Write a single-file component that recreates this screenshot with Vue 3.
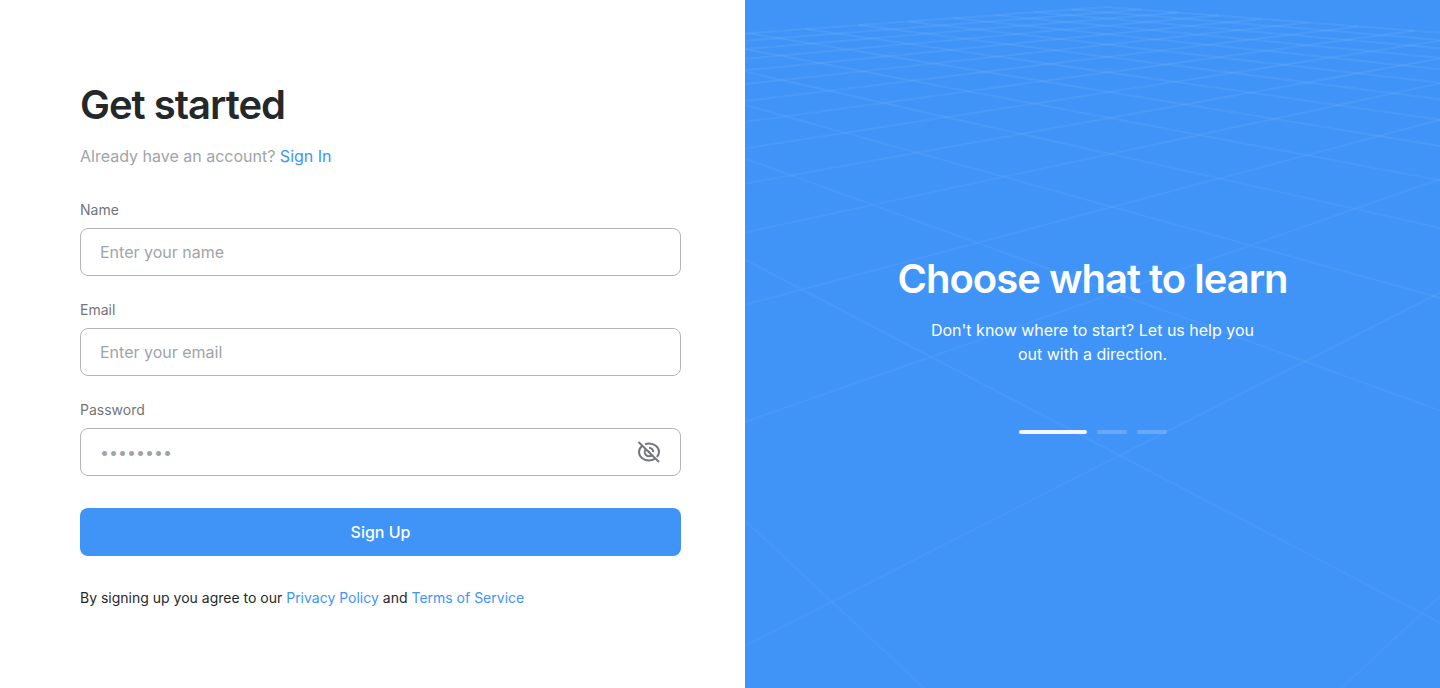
<script setup>
import { ref } from 'vue'

const name = ref('')
const email = ref('')
const password = ref('')
const revealed = ref(false)
const active = ref(0)
const slides = ['Choose what to learn', 'Learn at your pace', 'Track your progress']

// Floor grid seen in perspective: p and q number the two families of lines.
function project(p, q) {
  const k = (p + q) / 2
  const m = (p - q) / 4
  const depth = 1 / (0.001476 + 0.000427 * k - 0.000025 * m)
  return `${(359 + (0.03 + 0.87 * m) * depth).toFixed(1)} ${(depth - 70).toFixed(1)}`
}

const gridLines = []
for (let p = -27; p <= 27; p += 2) {
  const near = Math.max(-27, -4.6 - p)
  gridLines.push(`M${project(p, near)}L${project(p, 27)}`)
  gridLines.push(`M${project(near, p)}L${project(27, p)}`)
}
</script>

<template>
  <main class="page">
    <section class="signup">
      <h1 class="title">Get started</h1>
      <p class="lead">Already have an account? <a href="#signin">Sign In</a></p>
      <form class="form" @submit.prevent>
        <div class="field">
          <label for="name">Name</label>
          <input id="name" v-model="name" type="text" placeholder="Enter your name" />
        </div>
        <div class="field">
          <label for="email">Email</label>
          <input id="email" v-model="email" type="email" placeholder="Enter your email" />
        </div>
        <div class="field">
          <label for="password">Password</label>
          <div class="secret">
            <input id="password" v-model="password" :type="revealed ? 'text' : 'password'" placeholder="••••••••" />
            <button class="reveal" type="button" aria-label="Show password" @click="revealed = !revealed">
              <svg viewBox="0 0 24 24" width="24" height="24" fill="none" stroke="currentColor" stroke-width="2">
                <path d="M1.500 2L22 22" />
                <path d="M8 4.300C9.200 3.800 10.600 3.600 12 3.600c5.600 0 10 3.700 10 8.400 0 1.900-.8 3.600-2.100 5" />
                <path d="M5 6C3.200 7.500 2 9.600 2 12c0 4.700 4.400 8.400 10 8.400 2.200 0 4.200-.6 5.900-1.600" />
                <path d="M9 9a4.200 4.200 0 0 0 6 6" />
                <path d="M12 7.800a4.200 4.200 0 0 1 4.200 4.200" />
                <path d="M11 11l2 2" />
              </svg>
            </button>
          </div>
        </div>
        <button class="submit" type="submit">Sign Up</button>
      </form>
      <p class="terms">By signing up you agree to our <a href="#privacy">Privacy Policy</a> and <a href="#terms">Terms of Service</a></p>
    </section>
    <section class="promo">
      <svg class="floor" viewBox="0 0 695 688" preserveAspectRatio="xMidYMid slice" aria-hidden="true">
        <defs>
          <linearGradient id="haze" gradientUnits="userSpaceOnUse" x1="0" y1="0" x2="0" y2="688">
            <stop offset="0" stop-color="#fff" stop-opacity="0.06" />
            <stop offset="0.3" stop-color="#fff" stop-opacity="0.04" />
            <stop offset="1" stop-color="#fff" stop-opacity="0.03" />
          </linearGradient>
        </defs>
        <path v-for="d in gridLines" :key="d" :d="d" />
      </svg>
      <div class="pitch">
        <h2 class="title">Choose what to learn</h2>
        <p>Don't know where to start? Let us help you out with a direction.</p>
        <div class="steps">
          <button
            v-for="(slide, i) in slides"
            :key="slide"
            type="button"
            :class="['step', { current: i === active }]"
            :aria-label="slide"
            @click="active = i"
          ></button>
        </div>
      </div>
    </section>
  </main>
</template>

<style>
body {
  margin: 0;
}
</style>

<style scoped>
.page {
  display: grid;
  grid-template-columns: 745fr 695fr;
  min-height: 100vh;
  font-family: Inter, "Liberation Sans", sans-serif;
  font-size: 16px;
  line-height: 24px;
  color: #25282b;
  background: #fff;
}
.page * {
  box-sizing: border-box;
}
h1,
h2,
p {
  margin: 0;
}
a {
  color: #4094f7;
  text-decoration: none;
}
.signup {
  display: flex;
  flex-direction: column;
  justify-content: center;
  padding: 0 64px 0 80px;
}
.title {
  font-size: 40px;
  line-height: 50px;
  font-weight: 600;
  letter-spacing: -1px;
}
.lead {
  margin-top: 14px;
  color: #a0a4a8;
}
.form {
  display: flex;
  flex-direction: column;
  gap: 24px;
  margin-top: 32px;
}
.field {
  display: flex;
  flex-direction: column;
  gap: 8px;
}
label {
  font-size: 14px;
  line-height: 20px;
  color: #72767b;
}
input {
  width: 100%;
  height: 48px;
  padding: 0 19px;
  border: 1px solid #b3b6b9;
  border-radius: 8px;
  background: #fff;
  font: inherit;
  color: #25282b;
}
input::placeholder {
  color: #a0a4a8;
  opacity: 1;
}
.secret {
  display: grid;
  align-items: center;
}
.secret > * {
  grid-area: 1 / 1;
}
.reveal {
  justify-self: end;
  display: flex;
  margin-right: 20px;
  padding: 0;
  border: 0;
  background: none;
  color: #74777b;
  cursor: pointer;
}
.submit {
  height: 48px;
  margin-top: 8px;
  border: 0;
  border-radius: 8px;
  background: #4094f7;
  color: #fff;
  font: inherit;
  font-weight: 500;
  cursor: pointer;
}
.terms {
  margin-top: 32px;
  font-size: 14px;
  line-height: 20px;
}
.promo {
  position: relative;
  display: flex;
  align-items: center;
  justify-content: center;
  overflow: hidden;
  background: #4094f7;
  color: #fff;
}
.floor {
  position: absolute;
  inset: 0;
  width: 100%;
  height: 100%;
}
.floor path {
  fill: none;
  stroke: url(#haze);
  stroke-width: 2;
}
.pitch {
  position: relative;
  display: flex;
  flex-direction: column;
  align-items: center;
  text-align: center;
}
.pitch p {
  max-width: 344px;
  margin-top: 14px;
}
.steps {
  display: flex;
  gap: 10px;
  margin-top: 64px;
}
.step {
  width: 30px;
  height: 4px;
  padding: 0;
  border: 0;
  border-radius: 2px;
  background: rgba(255, 255, 255, 0.2);
  cursor: pointer;
}
.step.current {
  width: 68px;
  background: #f5f3fb;
}
</style>
